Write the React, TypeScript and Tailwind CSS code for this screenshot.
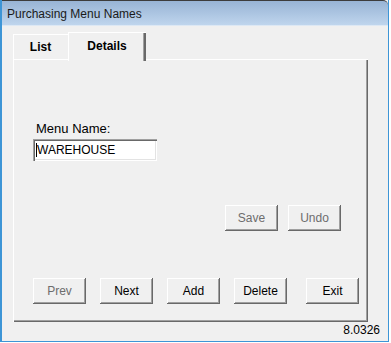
import React from "react";

const btnBase =
  "w-[53px] h-[26px] flex items-center justify-center text-[12px] bg-[#f0f0f0] shadow-[inset_-1px_-1px_#696969,inset_1px_1px_#ffffff,inset_-2px_-2px_#a0a0a0,inset_2px_2px_#f0f0f0]";

function Btn({ label, disabled, className = "" }: { label: string; disabled?: boolean; className?: string }) {
  return (
    <div className={`${btnBase} ${disabled ? "text-[#6d6d6d]" : "text-black"} ${className}`}>
      <span className="leading-[14px]">{label}</span>
    </div>
  );
}

export default function App() {
  return (
    <div className="w-[391px] h-[343px] bg-white" style={{ fontFamily: '"Liberation Sans", Arial, sans-serif' }}>
      <div className="w-[389px] h-[342px] flex flex-col border-l-2 border-r border-b border-l-[#3d95d6] border-r-[#3d95d6] border-b-[#3d95d6] bg-[#f0f0f0]">
        {/* Title bar */}
        <div className="h-[26px] shrink-0 flex items-center pl-[5px] border-t border-[#3c3c3c] rounded-tr-[5px] bg-gradient-to-b from-[#98b4d5] to-[#bfd5ed] border-b border-b-[#dde8f4]">
          <span className="text-[12px] text-[#1a1a1a] leading-[16px] mt-[1px]">Purchasing Menu Names</span>
        </div>

        {/* Client */}
        <div className="flex-1 flex flex-col pl-[11px] pr-[8px]">
          {/* Tabs */}
          <div className="flex items-end pt-[6px] h-[33px] relative z-10">
            <div className="w-[55px] h-[25px] flex items-center justify-center text-[12px] font-bold text-black shadow-[inset_1px_1px_#ffffff] bg-[#f0f0f0]">
              List
            </div>
            <div className="w-[78px] h-[29px] -mb-[2px] self-start flex items-start pt-[7px] justify-center text-[12px] font-bold text-black bg-[#f0f0f0] shadow-[inset_1px_1px_#ffffff,inset_-2px_0_#696969,inset_-3px_0_#a0a0a0]">
              <span className="leading-[14px]">Details</span>
            </div>
          </div>

          {/* Panel */}
          <div className="w-[355px] h-[263px] flex flex-col pl-[20px] shadow-[inset_1px_1px_#ffffff,inset_-1px_-1px_#696969,inset_-2px_-2px_#a0a0a0]">
            <div className="mt-[62px] ml-[3px] text-[13px] leading-[15px] text-black">Menu Name:</div>
            <div className="mt-[3px] w-[124px] h-[22px] bg-white flex items-center pl-[3px] shadow-[inset_1px_1px_#a0a0a0,inset_2px_2px_#696969,inset_-1px_-1px_#ffffff,inset_-2px_-2px_#e3e3e3]">
              <span className="w-px h-[14px] bg-black"></span>
              <span className="text-[12px] leading-[14px] text-black">WAREHOUSE</span>
            </div>
            <div className="flex mt-[44px] ml-[192px] gap-[10px]">
              <Btn label="Save" disabled />
              <Btn label="Undo" disabled />
            </div>
            <div className="flex mt-[47px]">
              <Btn label="Prev" disabled />
              <Btn label="Next" className="ml-[14px]" />
              <Btn label="Add" className="ml-[14px]" />
              <Btn label="Delete" className="ml-[14px]" />
              <Btn label="Exit" className="ml-[19px]" />
            </div>
          </div>

          {/* Version */}
          <div className="flex justify-end mt-[1px]">
            <span className="text-[12px] leading-[14px] text-black">8.0326</span>
          </div>
        </div>
      </div>
    </div>
  );
}
